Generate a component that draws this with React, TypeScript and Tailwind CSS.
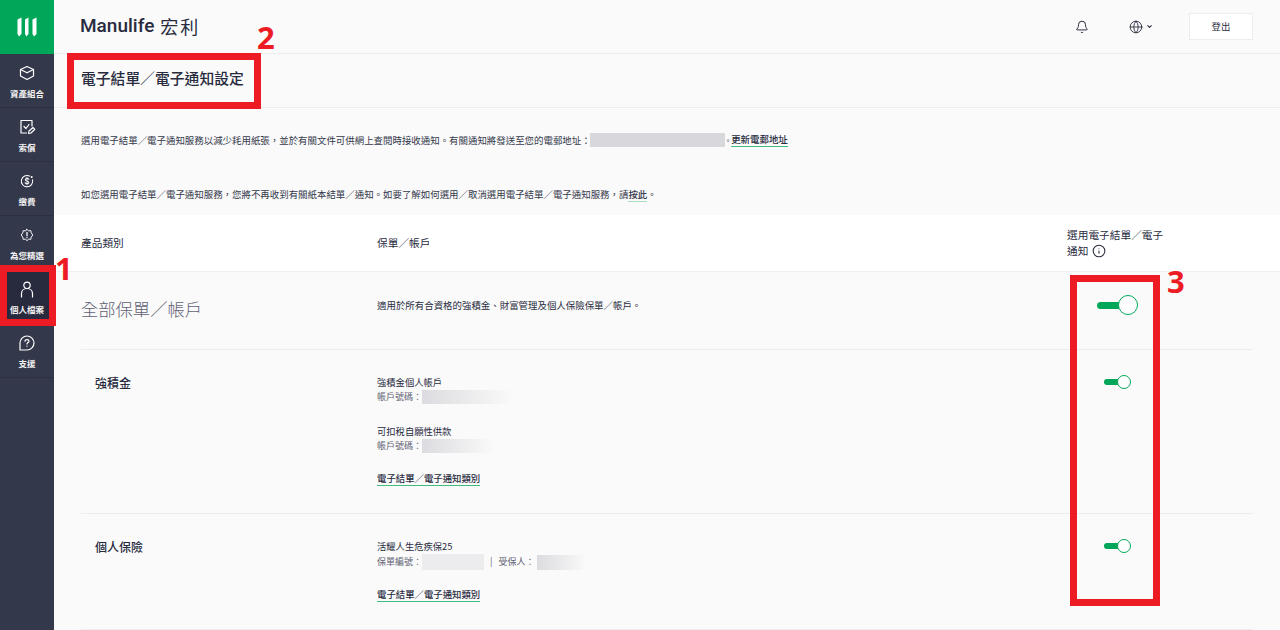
import { ReactNode } from "react";
import { Bell, Globe, ChevronDown, Info } from "lucide-react";

const font = "font-['Noto_Sans_CJK_TC','Noto_Sans',sans-serif]";

function NavIcon({ children }: { children: ReactNode }) {
  return (
    <svg width="18" height="18" viewBox="0 0 18 18" fill="none" stroke="white" strokeWidth="1.2" strokeLinejoin="round" strokeLinecap="round">
      {children}
    </svg>
  );
}

const navItems = [
  {
    label: "資產組合",
    icon: (
      <NavIcon>
        <path d="M9 2.5 L15.5 5.5 V12 L9 15.5 L2.5 12 V5.5 Z" />
        <path d="M2.5 5.5 L9 8.8 L15.5 5.5" />
      </NavIcon>
    ),
  },
  {
    label: "索償",
    icon: (
      <NavIcon>
        <path d="M14 8 V2.5 H3 V15 H8.5" />
        <path d="M6 8.5 L8 10.5 L11 6.5" />
        <path d="M10.5 15.5 L11 13 L15 9.5 L16.8 11.3 L13 15 Z" />
      </NavIcon>
    ),
  },
  {
    label: "繳費",
    icon: (
      <NavIcon>
        <g transform="translate(9 9) scale(0.85) translate(-9 -9)">
          <path d="M12 3.2 A6.7 6.7 0 1 0 15.5 7.5" />
          <path d="M11.2 7 C10.5 5.6 7 5.6 7 7.6 C7 9.6 11.2 8.7 11.2 10.8 C11.2 12.6 7.6 12.6 6.8 11" />
          <path d="M9 4.8 V13.4" strokeWidth="1" />
          <circle cx="14.5" cy="4.2" r="0.6" fill="white" />
        </g>
      </NavIcon>
    ),
  },
  {
    label: "為您精選",
    icon: (
      <NavIcon>
        <g transform="translate(9 9) scale(0.8) translate(-9 -9)">
          <path d="M9 2 L11 3.8 L13.8 3.6 L14.3 6.3 L16.2 9 L14.3 11.7 L13.8 14.4 L11 14.2 L9 16 L7 14.2 L4.2 14.4 L3.7 11.7 L1.8 9 L3.7 6.3 L4.2 3.6 L7 3.8 Z" />
          <path d="M9 6 V10" strokeWidth="1.6" />
          <path d="M9 12.2 V12.4" strokeWidth="1.6" />
        </g>
      </NavIcon>
    ),
  },
  {
    label: "個人檔案",
    active: true,
    icon: (
      <NavIcon>
        <circle cx="9" cy="5.3" r="3.2" />
        <path d="M3.5 17 V13.5 C3.5 10.5 6 8.5 9 8.5 C12 8.5 14.5 10.5 14.5 13.5 V17" />
      </NavIcon>
    ),
  },
  {
    label: "支援",
    icon: (
      <NavIcon>
        <path d="M2 16 V9 A7 7 0 1 1 9 16 Z" />
        <path d="M7 7.2 C7 5 11 5 11 7.2 C11 8.6 9 8.6 9 10" />
        <path d="M9 12 V12.2" />
      </NavIcon>
    ),
  },
];

function Toggle({ big }: { big?: boolean }) {
  if (big) {
    return (
      <div className="flex items-center">
        <div className="w-[22px] h-[7px] bg-[#00a758] rounded-l-full" />
        <div className="w-[20px] h-[20px] -ml-[1px] rounded-full border-[1.5px] border-[#00a758] bg-white" />
      </div>
    );
  }
  return (
    <div className="flex items-center">
      <div className="w-[16px] h-[6px] bg-[#00a758] rounded-l-full" />
      <div className="w-[14px] h-[14px] -ml-[3px] rounded-full border-[1.5px] border-[#00a758] bg-white" />
    </div>
  );
}

function Blur({ w, h = "h-[14px]" }: { w: string; h?: string }) {
  return <span className={`inline-block ${w} ${h} bg-gradient-to-r from-[#dcdce0] to-[#f9f9f9]`} />;
}

function LinkText({ children }: { children: string }) {
  return (
    <a className="text-[9.4px] leading-[13px] text-[#282b3e] font-medium border-b border-[#3fbd7f] inline-block">
      {children}
    </a>
  );
}

export default function App() {
  return (
    <div className={`relative flex h-[630px] w-[1280px] overflow-hidden bg-[#fafafa] text-[#282b3e] ${font}`}>
      <aside className="w-[54px] shrink-0 bg-[#34384b]">
        <div className="h-[54px] bg-[#00a758] flex items-center justify-center">
          <svg width="20" height="20" viewBox="0 0 20 20" fill="white">
            <path d="M0.5 2.5 L4.5 0.5 L4.5 17 L2 19.5 L0.5 17 Z" />
            <path d="M8 2.5 L11.5 0.5 L11.5 17 L9.5 19.5 L8 17 Z" />
            <path d="M15.5 2.5 L19.5 0.5 L19.5 17 L17 19.5 L15.5 17 Z" />
          </svg>
        </div>
        {navItems.map((item) => (
          <div
            key={item.label}
            className={`h-[54px] pt-[10px] flex flex-col items-center border-b border-[#2c3042] ${
              item.active ? "bg-[#282b3e]" : ""
            }`}
          >
            {item.icon}
            <span className="mt-[5px] text-[8.5px] leading-[12px] font-bold text-[#f2f2f2]">{item.label}</span>
          </div>
        ))}
      </aside>

      <main className="flex-1 min-w-0">
        <header className="h-[54px] flex items-center border-b border-[#ededed] pl-[26px] pr-[27px]">
          <div className="flex items-center text-[#282b3e]">
            <span className="font-['Roboto',sans-serif] text-[19px] font-medium">Manulife</span>
            <span className="ml-[6px] text-[18px] tracking-[2px] leading-none -mt-[1px]">宏利</span>
          </div>
          <Bell className="ml-auto w-[14px] h-[14px]" strokeWidth={1.7} />
          <div className="ml-[40px] flex items-center gap-[3px]">
            <Globe className="w-[14px] h-[14px]" strokeWidth={1.5} />
            <ChevronDown className="w-[7px] h-[7px]" strokeWidth={3.5} />
          </div>
          <button className="ml-[36px] w-[64px] h-[27px] bg-white border border-[#ededed] text-[9.4px]">登出</button>
        </header>

        <div className="h-[54px] flex items-center border-b border-[#ededed] pl-[27px]">
          <h1 className="text-[14.8px] font-medium text-[#282b3e] -mt-[4px]">電子結單／電子通知設定</h1>
        </div>

        <section className="h-[107px] pl-[27px] text-[9.45px] text-[#34384b] relative">
          <div className="h-[54px] pt-[25px] flex items-start">
            <span className="leading-[14px]">
              選用電子結單／電子通知服務以減少耗用紙張，並於有關文件可供網上查閱時接收通知。有關通知將發送至您的電郵地址：
            </span>
            <span className="w-[135px] h-[14px] bg-[#d8d8dc] -ml-[1px]" />
            <span className="text-[6.5px] leading-[14px]">。</span>
            <a className="leading-[13px] font-medium text-[#282b3e] border-b border-[#3fbd7f]">更新電郵地址</a>
          </div>
          <p className="leading-[14px] pt-[25px]">
            如您選用電子結單／電子通知服務，您將不再收到有關紙本結單／通知。如要了解如何選用／取消選用電子結單／電子通知服務，請
            <a className="font-medium border-b border-[#a8dfc2]">按此</a>。
          </p>
        </section>

        <div className="h-[57px] bg-white flex items-center border-b border-[#f0f0f0] pl-[27px] text-[10.7px]">
          <div className="w-[296px]">產品類別</div>
          <div className="w-[690px]">保單／帳戶</div>
          <div className="w-[100px] leading-[16px] -mt-[1px]">
            選用電子結單／電子
            <br />
            <span className="inline-flex items-center gap-[4px]">
              通知 <Info className="w-[14px] h-[14px]" strokeWidth={1.8} />
            </span>
          </div>
        </div>

        <div className="mx-[27px]">
          <div className="h-[78px] flex border-b border-[#ededed]">
            <div className="w-[296px] pt-[24px] text-[17.3px] leading-[26px] font-light text-[#5e6073]">全部保單／帳戶</div>
            <div className="w-[720px] pt-[26px] text-[9.45px] leading-[14px]">適用於所有合資格的強積金、財富管理及個人保險保單／帳戶。</div>
            <div className="pt-[23px]"><Toggle big /></div>
          </div>

          <div className="h-[164px] flex border-b border-[#ededed]">
            <div className="w-[296px] pl-[14px] pt-[24px] text-[12px] leading-[18px] font-medium">強積金</div>
            <div className="w-[727px] pt-[25px] text-[9.3px] leading-[14px]">
              <div>強積金個人帳戶</div>
              <div className="mt-[1px] flex items-center text-[9px] text-[#5e6073]">帳戶號碼：<Blur w="w-[89px]" /></div>
              <div className="mt-[20px]">可扣稅自願性供款</div>
              <div className="mt-[1px] flex items-center text-[9px] text-[#5e6073]">帳戶號碼：<Blur w="w-[70px]" /></div>
              <div className="mt-[18px]"><LinkText>電子結單／電子通知類別</LinkText></div>
            </div>
            <div className="pt-[25px]"><Toggle /></div>
          </div>

          <div className="h-[116px] flex border-b border-[#ededed]">
            <div className="w-[296px] pl-[14px] pt-[24px] text-[12px] leading-[18px] font-medium">個人保險</div>
            <div className="w-[727px] pt-[25px] text-[9.3px] leading-[14px]">
              <div>活耀人生危疾保25</div>
              <div className="mt-[1px] flex items-center text-[9px] text-[#5e6073]">
                保單編號：
                <span className="w-[62px] h-[16px] bg-[#ececee]" />
                <span className="mx-[6px]">|</span>
                受保人：
                <span className="ml-[3px] flex"><Blur w="w-[48px]" h="h-[15px]" /></span>
              </div>
              <div className="mt-[17px]"><LinkText>電子結單／電子通知類別</LinkText></div>
            </div>
            <div className="pt-[25px]"><Toggle /></div>
          </div>
        </div>
      </main>

      {/* red annotations drawn over the page */}
      <div className="absolute left-0 top-[265px] w-[56px] h-[61px] border-[7px] border-[#ed1c24]" />
      <div className="absolute left-[67px] top-[53px] w-[194px] h-[56px] border-[7px] border-[#ed1c24]" />
      <div className="absolute left-[1070px] top-[275px] w-[90px] h-[331px] border-[7px] border-[#ed1c24]" />
      <span className="absolute left-[55px] top-[250px] text-[31px] leading-[36px] font-bold text-[#ed1c24] font-['Open_Sans',sans-serif]">1</span>
      <span className="absolute left-[257px] top-[19px] text-[31px] leading-[36px] font-bold text-[#ed1c24] font-['Open_Sans',sans-serif]">2</span>
      <span className="absolute left-[1167px] top-[263px] text-[31px] leading-[36px] font-bold text-[#ed1c24] font-['Open_Sans',sans-serif]">3</span>
    </div>
  );
}
